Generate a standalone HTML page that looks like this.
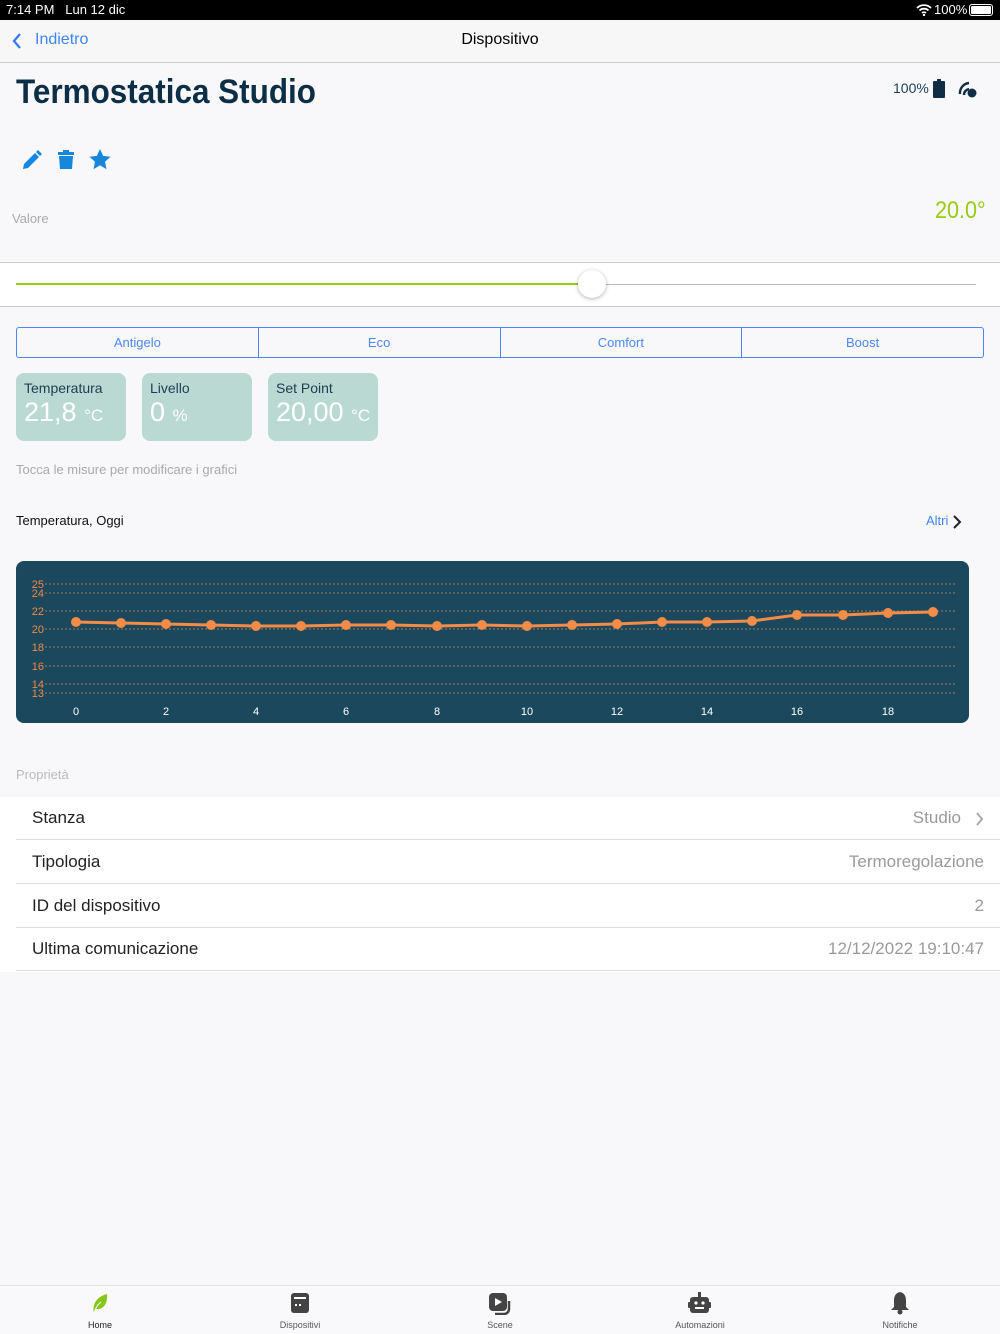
<!DOCTYPE html>
<html><head><meta charset="utf-8"><style>
*{margin:0;padding:0;box-sizing:border-box}
body{width:1000px;height:1334px;background:#f8f8fa;font-family:"Liberation Sans",sans-serif;position:relative;overflow:hidden}
.abs{position:absolute}
.sb{left:0;top:0;width:1000px;height:20px;background:#000;color:#fff;font-size:13px}
.nav{left:0;top:20px;width:1000px;height:43px;background:#f7f7f7;border-bottom:1px solid #ccc}
.card{top:373px;width:110px;height:68px;background:#bad9d2;border-radius:8px}
.card .l{position:absolute;left:8px;top:7px;font-size:14px;color:#1c3e55}
.card .v{position:absolute;left:8px;top:24px;font-size:27px;color:#fff;white-space:nowrap}
.card .v small{font-size:17px}
.seg{left:16px;top:327px;width:968px;height:31px;border:1px solid #4a88f0;border-radius:3px;display:flex}
.seg div{flex:1;text-align:center;line-height:29px;font-size:13px;color:#4a88f0;border-left:1px solid #4a88f0}
.seg div:first-child{border-left:none}
.row{left:16px;width:984px;height:43px;border-bottom:1px solid #ddd;font-size:17px;color:#222}
.row .k{position:absolute;left:16px;top:11px}
.row .v{position:absolute;right:16px;top:11px;color:#9a9a9a}
.tab{top:1290px;width:120px;text-align:center;font-size:9px;color:#555}
</style></head><body>
<div class="abs sb"><span class="abs" style="left:6px;top:2px">7:14 PM&nbsp;&nbsp;&nbsp;Lun 12 dic</span>
<span class="abs" style="left:934px;top:2px">100%</span>
<svg class="abs" style="left:916px;top:4px" width="16" height="12" viewBox="0 0 16 12"><path d="M1 4a10 10 0 0 1 14 0M3.5 6.5a6.5 6.5 0 0 1 9 0M6 9a3 3 0 0 1 4 0" stroke="#fff" stroke-width="1.8" fill="none"/><circle cx="8" cy="11" r="1.2" fill="#fff"/></svg>
<div class="abs" style="left:969px;top:4px;width:24px;height:12px;border:1px solid #fff;border-radius:3px;padding:1px"><div style="background:#fff;width:100%;height:100%;border-radius:1px"></div></div></div>
<div class="abs nav">
<svg class="abs" style="left:12px;top:13px" width="10" height="16"><path d="M8 1L2 8l6 7" stroke="#3478f6" stroke-width="2.2" fill="none"/></svg>
<span class="abs" style="left:35px;top:11px;font-size:16px;color:#3f86f3">Indietro</span>
<span class="abs" style="left:0;width:1000px;text-align:center;top:11px;font-size:16px;color:#000">Dispositivo</span></div>
<div class="abs" style="left:16px;top:73px;font-size:34px;font-weight:bold;color:#0d2f45;transform:scaleX(0.925);transform-origin:left top;white-space:nowrap">Termostatica Studio</div>
<span class="abs" style="left:893px;top:80px;font-size:14px;color:#1c3e55">100%</span>
<div class="abs" style="left:933px;top:81px;width:12px;height:17px;background:#0f2d44;border-radius:1px"></div>
<div class="abs" style="left:937px;top:79px;width:4px;height:3px;background:#0f2d44"></div>
<svg class="abs" style="left:958px;top:80px" width="20" height="18" viewBox="0 0 20 18"><path d="M2 14a10 10 0 0 1 9-11M6 15a6 6 0 0 1 5-6" stroke="#0f2d44" stroke-width="2.4" fill="none"/><circle cx="14" cy="13" r="4.5" fill="#0f2d44"/></svg>
<svg class="abs" style="left:21px;top:150px" width="22" height="20" viewBox="0 0 22 20"><path d="M2 19l1-5L14 3l4 4L7 18z" fill="#1787db"/><path d="M15 2l2-2 4 4-2 2z" fill="#1787db"/></svg>
<svg class="abs" style="left:57px;top:150px" width="18" height="20" viewBox="0 0 18 20"><rect x="1" y="2" width="16" height="3" fill="#1787db"/><rect x="6" y="0" width="6" height="3" fill="#1787db"/><path d="M2 6h14l-1 13H3z" fill="#1787db"/></svg>
<svg class="abs" style="left:89px;top:149px" width="22" height="21" viewBox="0 0 24 23"><path d="M12 0l3.5 7.5 8 1-6 5.5 1.6 8L12 18l-7.1 4 1.6-8-6-5.5 8-1z" fill="#1787db"/></svg>
<span class="abs" style="left:12px;top:211px;font-size:13px;color:#aaa">Valore</span>
<span class="abs" style="left:935px;top:197px;font-size:24px;color:#95cc14;transform:scaleX(0.9);transform-origin:left top">20.0°</span>
<div class="abs" style="left:0;top:262px;width:1000px;height:45px;background:#fff;border-top:1px solid #ccc;border-bottom:1px solid #ccc"></div>
<div class="abs" style="left:16px;top:283px;width:576px;height:2px;background:#95cc14"></div>
<div class="abs" style="left:592px;top:284px;width:384px;height:1px;background:#bbb"></div>
<div class="abs" style="left:578px;top:270px;width:28px;height:28px;border-radius:50%;background:#fff;box-shadow:0 1px 4px rgba(0,0,0,.3)"></div>
<div class="abs seg"><div>Antigelo</div><div>Eco</div><div>Comfort</div><div>Boost</div></div>
<div class="abs card" style="left:16px"><div class="l">Temperatura</div><div class="v">21,8 <small>°C</small></div></div>
<div class="abs card" style="left:142px"><div class="l">Livello</div><div class="v">0 <small>%</small></div></div>
<div class="abs card" style="left:268px"><div class="l">Set Point</div><div class="v">20,00 <small>°C</small></div></div>
<span class="abs" style="left:16px;top:462px;font-size:13px;color:#aaa">Tocca le misure per modificare i grafici</span>
<span class="abs" style="left:16px;top:513px;font-size:13px;color:#111">Temperatura, Oggi</span>
<span class="abs" style="left:926px;top:513px;font-size:13px;color:#3f86f3">Altri</span>
<svg class="abs" style="left:952px;top:515px" width="10" height="14"><path d="M2 1l6 6-6 6" stroke="#222" stroke-width="2" fill="none"/></svg>
<svg class="abs" style="left:16px;top:561px" width="953" height="162" viewBox="16 561 953 162">
<rect x="16" y="561" width="953" height="162" rx="8" fill="#1b485d"/>
<g stroke="#c28a5c" stroke-width="1" stroke-dasharray="2,2" opacity=".8">
<line x1="45" x2="955" y1="584" y2="584"/><line x1="45" x2="955" y1="593" y2="593"/><line x1="45" x2="955" y1="611" y2="611"/><line x1="45" x2="955" y1="629" y2="629"/><line x1="45" x2="955" y1="647" y2="647"/><line x1="45" x2="955" y1="666" y2="666"/><line x1="45" x2="955" y1="684" y2="684"/><line x1="45" x2="955" y1="693" y2="693"/></g>
<g fill="#f08a45" font-size="11" font-family="Liberation Sans" text-anchor="end">
<text x="44" y="588">25</text><text x="44" y="597">24</text><text x="44" y="615">22</text><text x="44" y="633">20</text><text x="44" y="651">18</text><text x="44" y="670">16</text><text x="44" y="688">14</text><text x="44" y="697">13</text></g>
<g fill="#fff" font-size="11" font-family="Liberation Sans" text-anchor="middle">
<text x="76" y="715">0</text><text x="166" y="715">2</text><text x="256" y="715">4</text><text x="346" y="715">6</text><text x="437" y="715">8</text><text x="527" y="715">10</text><text x="617" y="715">12</text><text x="707" y="715">14</text><text x="797" y="715">16</text><text x="888" y="715">18</text></g>
<g fill="#f48b47">
<polyline fill="none" stroke="#f48b47" stroke-width="3" points="76,622 121,623 166,624 211,625 256,626 301,626 346,625 391,625 437,626 482,625 527,626 572,625 617,624 662,622 707,622 752,621 797,615 843,615 888,613 933,612"/>
<circle cx="76" cy="622" r="5"/><circle cx="121" cy="623" r="5"/><circle cx="166" cy="624" r="5"/><circle cx="211" cy="625" r="5"/><circle cx="256" cy="626" r="5"/><circle cx="301" cy="626" r="5"/><circle cx="346" cy="625" r="5"/><circle cx="391" cy="625" r="5"/><circle cx="437" cy="626" r="5"/><circle cx="482" cy="625" r="5"/><circle cx="527" cy="626" r="5"/><circle cx="572" cy="625" r="5"/><circle cx="617" cy="624" r="5"/><circle cx="662" cy="622" r="5"/><circle cx="707" cy="622" r="5"/><circle cx="752" cy="621" r="5"/><circle cx="797" cy="615" r="5"/><circle cx="843" cy="615" r="5"/><circle cx="888" cy="613" r="5"/><circle cx="933" cy="612" r="5"/></g>
</svg>
<span class="abs" style="left:16px;top:767px;font-size:13px;color:#bbb">Proprietà</span>
<div class="abs" style="left:0;top:797px;width:1000px;height:175px;background:#fff"></div>
<div class="abs row" style="top:797px"><span class="k">Stanza</span><span class="v" style="right:39px">Studio</span><svg class="abs" style="right:16px;top:15px" width="9" height="14"><path d="M2 1l5 6-5 6" stroke="#aaa" stroke-width="2" fill="none"/></svg></div>
<div class="abs row" style="top:841px"><span class="k">Tipologia</span><span class="v">Termoregolazione</span></div>
<div class="abs row" style="top:885px"><span class="k">ID del dispositivo</span><span class="v">2</span></div>
<div class="abs row" style="top:928px"><span class="k">Ultima comunicazione</span><span class="v">12/12/2022 19:10:47</span></div>
<div class="abs" style="left:0;top:1285px;width:1000px;height:49px;background:#f9f9fb;border-top:1px solid #e4e4e8"></div>
<svg class="abs" style="left:90px;top:1293px" width="20" height="22" viewBox="0 0 20 22"><path d="M4 20C2 12 6 4 17 1c1 10-4 16-11 15" fill="#86c71a"/><path d="M4 21c1-5 3-9 7-12" stroke="#fff" stroke-width="1" fill="none"/></svg>
<div class="abs tab" style="left:40px;top:1320px;color:#222">Home</div>
<svg class="abs" style="left:291px;top:1293px" width="18" height="20"><rect x="0" y="0" width="18" height="20" rx="3" fill="#444"/><rect x="3" y="4" width="12" height="2" fill="#fff"/><rect x="4" y="11" width="2" height="2" fill="#fff"/><rect x="8" y="11" width="2" height="2" fill="#fff"/></svg>
<div class="abs tab" style="left:240px;top:1320px">Dispositivi</div>
<svg class="abs" style="left:489px;top:1293px" width="22" height="22"><rect x="0" y="0" width="18" height="18" rx="4" fill="#444"/><path d="M6 5l7 4-7 4z" fill="#fff"/><path d="M20 8v8a5 5 0 0 1-5 5H6" stroke="#444" stroke-width="2.5" fill="none"/></svg>
<div class="abs tab" style="left:440px;top:1320px">Scene</div>
<svg class="abs" style="left:688px;top:1292px" width="23" height="22"><rect x="10" y="0" width="3" height="5" fill="#444"/><rect x="2" y="5" width="19" height="16" rx="3" fill="#444"/><rect x="0" y="10" width="23" height="6" rx="1" fill="#444"/><circle cx="8" cy="11" r="1.6" fill="#fff"/><circle cx="15" cy="11" r="1.6" fill="#fff"/><rect x="7" y="15" width="9" height="2" fill="#fff"/></svg>
<div class="abs tab" style="left:640px;top:1320px">Automazioni</div>
<svg class="abs" style="left:890px;top:1292px" width="20" height="23"><path d="M10 0c5 1 6 5 6 9v6l3 3H1l3-3V9c0-4 1-8 6-9z" fill="#444"/><circle cx="10" cy="20" r="2.5" fill="#444"/></svg>
<div class="abs tab" style="left:840px;top:1320px">Notifiche</div>
</body></html>
